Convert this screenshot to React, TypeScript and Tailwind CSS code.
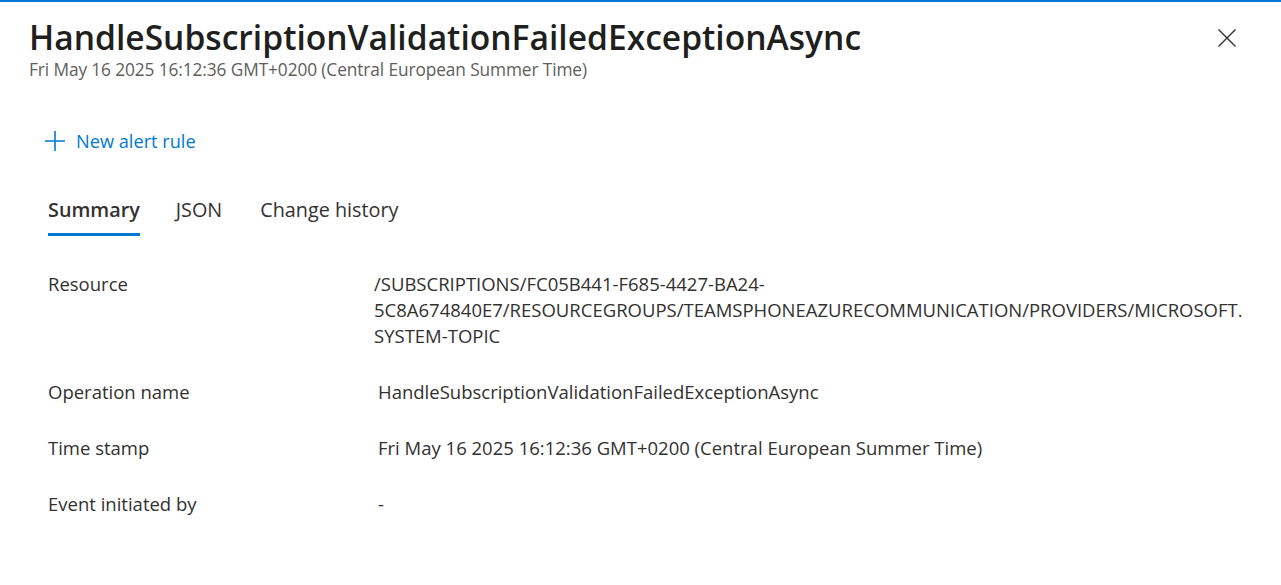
const font = { fontFamily: '"Open Sans", "Noto Sans", sans-serif' };

const rows = [
  { label: "Operation name", value: "HandleSubscriptionValidationFailedExceptionAsync" },
  { label: "Time stamp", value: "Fri May 16 2025 16:12:36 GMT+0200 (Central European Summer Time)" },
  { label: "Event initiated by", value: "-" },
];

export default function App() {
  return (
    <div className="min-h-screen bg-white text-[#323130] border-t-2 border-[#0078d4]" style={font}>
      <header className="flex items-start justify-between pl-[29px] pr-[45px] pt-[13px]">
        <div>
          <h1 className="text-[33.6px] leading-[44px] font-semibold text-[#201f1e]">
            HandleSubscriptionValidationFailedExceptionAsync
          </h1>
          <p className="text-[17.3px] leading-[22px] text-[#605e5c] tracking-[-0.1px]">
            Fri May 16 2025 16:12:36 GMT+0200 (Central European Summer Time)
          </p>
        </div>
        <button className="mt-[14px] text-[#323130]">
          <svg width="18" height="18" viewBox="0 0 18 18" fill="none" stroke="currentColor" strokeWidth="1.4">
            <path d="M0.5 0.5 L17.5 17.5 M17.5 0.5 L0.5 17.5" />
          </svg>
        </button>
      </header>

      <div className="pl-[45px] pt-[48px]">
        <button className="flex items-center gap-[11px] text-[#0078d4]">
          <svg width="20" height="20" viewBox="0 0 20 20" fill="none" stroke="currentColor" strokeWidth="1.6">
            <path d="M10 0 V20 M0 10 H20" />
          </svg>
          <span className="text-[18.2px] leading-[24px]">New alert rule</span>
        </button>
      </div>

      <nav className="flex pl-[48px] pt-[43px] text-[19.8px] leading-[28px]">
        <div className="border-b-[3px] border-[#0078d4] pb-[9px]">
          <span className="font-semibold">Summary</span>
        </div>
        <span className="ml-[36px]">JSON</span>
        <span className="ml-[38px]">Change history</span>
      </nav>

      <dl className="pl-[48px] pt-[35px] text-[18.5px] leading-[26px]">
        <div className="flex">
          <dt className="w-[326px] shrink-0">Resource</dt>
          <dd className="w-[870px] overflow-hidden whitespace-nowrap">
            <div>/SUBSCRIPTIONS/FC05B441-F685-4427-BA24-</div>
            <div>5C8A674840E7/RESOURCEGROUPS/TEAMSPHONEAZURECOMMUNICATION/PROVIDERS/MICROSOFT.EVENTGRID/SYSTEMTOPICS/TEAMSPHONEAZURECOMMUNICATION-</div>
            <div>SYSTEM-TOPIC</div>
          </dd>
        </div>
        {rows.map((r) => (
          <div key={r.label} className="flex mt-[30px]">
            <dt className="w-[330px] shrink-0">{r.label}</dt>
            <dd className="whitespace-nowrap">{r.value}</dd>
          </div>
        ))}
      </dl>
    </div>
  );
}
